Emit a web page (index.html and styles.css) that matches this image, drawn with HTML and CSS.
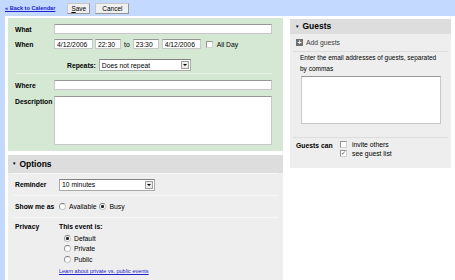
FILE: index.html
```html
<!DOCTYPE html>
<html>
<head>
<meta charset="utf-8" />
<title>Edit Event</title>
<link rel="stylesheet" href="styles.css">
</head>
<body>

<div class="topbar">
	<a class="back" href="#">« Back to Calendar</a>
	<button class="btn save"><u>S</u>ave</button>
	<button class="btn cancel">Cancel</button>
</div>

<div class="main">
	<div class="leftcol">
		<div class="details">
			<div class="row">
				<div class="label">What</div>
				<input class="field wide" type="text" />
			</div>
			<div class="row when">
				<div class="label">When</div>
				<input class="field date" type="text" value="4/12/2006" />
				<input class="field time" type="text" value="22:30" />
				<span class="to">to</span>
				<input class="field time" type="text" value="23:30" />
				<input class="field date" type="text" value="4/12/2006" />
				<input class="check" type="checkbox" />
				<span class="allday">All Day</span>
			</div>
			<div class="row repeats">
				<div class="label">Repeats:</div>
				<div class="selectbox repeatsel">
					<select><option>Does not repeat</option></select>
					<span class="arrow"></span>
				</div>
			</div>
			<div class="row where">
				<div class="label">Where</div>
				<input class="field wide" type="text" />
			</div>
			<div class="row desc">
				<div class="label">Description</div>
				<textarea class="field wide"></textarea>
			</div>
		</div>

		<div class="panel options">
			<div class="panelhead"><span class="tri">▼</span>Options</div>
			<div class="optrow">
				<div class="label">Reminder</div>
				<div class="selectbox remindsel">
					<select><option>10 minutes</option></select>
					<span class="arrow"></span>
				</div>
			</div>
			<div class="optrow">
				<div class="label">Show me as</div>
				<label class="radio"><input type="radio" name="show" />Available</label>
				<label class="radio"><input type="radio" name="show" checked />Busy</label>
			</div>
			<div class="optrow privacy">
				<div class="label">Privacy</div>
				<div class="privlist">
					<div class="privtitle">This event is:</div>
					<label class="radio"><input type="radio" name="priv" checked />Default</label>
					<label class="radio"><input type="radio" name="priv" />Private</label>
					<label class="radio"><input type="radio" name="priv" />Public</label>
					<a class="learn" href="#">Learn about private vs. public events</a>
				</div>
			</div>
		</div>
	</div>

	<div class="panel guests">
		<div class="panelhead"><span class="tri">▼</span>Guests</div>
		<div class="addguests"><span class="plus">+</span>Add guests</div>
		<div class="guestbody">
			<div class="hint">Enter the email addresses of guests, separated by commas</div>
			<textarea class="field guestarea"></textarea>
		</div>
		<div class="guestscan">
			<div class="label">Guests can</div>
			<div class="perms">
				<label class="perm"><input class="check" type="checkbox" />invite others</label>
				<label class="perm"><input class="check" type="checkbox" checked />see guest list</label>
			</div>
		</div>
	</div>
</div>

</body>
</html>
```

FILE: styles.css
```css
html, body {
	margin: 0;
	padding: 0;
	width: 100%;
	height: 100%;
	font-family: "Liberation Sans", Arial, sans-serif;
	font-size: 6.8px;
	color: rgb(0, 0, 0);
	background: rgb(195, 217, 255);
	overflow: hidden;
}

.topbar {
	height: 16px;
	display: flex;
	align-items: center;
	padding-left: 5px;
	box-sizing: border-box;
}

.back {
	color: rgb(32, 32, 204);
	font-size: 5.6px;
	font-weight: bold;
	margin-right: 12px;
}

.btn {
	font-family: inherit;
	font-size: 6.5px;
	height: 11px;
	padding: 0 3px;
	margin-right: 5px;
	background: rgb(240, 240, 240);
	border: 1px solid rgb(150, 150, 150);
	border-top-color: rgb(200, 200, 200);
	border-left-color: rgb(200, 200, 200);
	line-height: 9px;
}

.btn.cancel {
	padding: 0 6px;
}

.main {
	margin-left: 5px;
	background: white;
	height: 264px;
	display: flex;
	gap: 7px;
	padding: 2px 0 0 3px;
	box-sizing: border-box;
}

.leftcol {
	width: 275px;
	display: flex;
	flex-direction: column;
	gap: 4px;
}

.label {
	font-weight: bold;
	width: 39px;
	flex-shrink: 0;
}

.field {
	font-family: inherit;
	font-size: 6.8px;
	height: 10px;
	box-sizing: border-box;
	padding: 0 2px;
	border: 1px solid rgb(200, 200, 200);
	border-top-color: rgb(150, 150, 150);
	background: white;
	margin: 0;
	resize: none;
	outline: none;
}

/* green details block */

.details {
	background: rgb(213, 232, 212);
	padding: 6px 11px 6px 7px;
	display: flex;
	flex-direction: column;
}

.row {
	display: flex;
	align-items: center;
}

.field.wide {
	width: 218px;
}

.when {
	margin-top: 5px;
}

.field.date {
	width: 39px;
	margin-right: 2px;
}

.field.time {
	width: 26px;
}

.to {
	margin: 0 3px;
}

.when .time + .to + .time {
	margin-right: 3px;
}

.check {
	appearance: none;
	width: 7px;
	height: 7px;
	margin: 0 3px 0 3px;
	border: 1px solid rgb(150, 150, 150);
	border-right-color: rgb(210, 210, 210);
	border-bottom-color: rgb(210, 210, 210);
	background: white;
	position: relative;
	box-sizing: border-box;
}

.check:checked::after {
	content: "✓";
	position: absolute;
	left: 0;
	top: -2px;
	font-size: 6px;
	color: rgb(60, 60, 60);
}

.allday {
	margin-left: 1px;
}

.repeats {
	margin-top: 10px;
	padding-left: 52px;
	padding-bottom: 2px;
	border-bottom: 1px solid rgb(228, 240, 228);
}

.repeats .label {
	width: auto;
	margin-right: 3px;
}

.selectbox {
	display: flex;
	height: 12px;
	box-sizing: border-box;
	border: 1px solid rgb(170, 170, 170);
	border-top-color: rgb(130, 130, 130);
	background: white;
	align-items: center;
}

.selectbox select {
	appearance: none;
	border: none;
	background: transparent;
	font-family: inherit;
	font-size: 6.8px;
	flex: 1;
	padding: 0 2px;
	outline: none;
}

.selectbox .arrow {
	width: 6px;
	height: 6px;
	margin-right: 1px;
	border: 1px solid rgb(160, 160, 160);
	background: rgb(235, 235, 235);
	position: relative;
}

.selectbox .arrow::after {
	content: "";
	position: absolute;
	left: 1px;
	top: 2px;
	border-left: 2px solid transparent;
	border-right: 2px solid transparent;
	border-top: 2px solid black;
}

.repeatsel {
	width: 92px;
}

.where {
	margin-top: 6px;
}

.desc {
	margin-top: 6px;
	align-items: flex-start;
}

.desc .label {
	padding-top: 2px;
}

.desc textarea {
	height: 49px;
}

/* gray panels */

.panel {
	background: rgb(238, 238, 238);
}

.panelhead {
	background: rgb(221, 221, 221);
	font-size: 8.5px;
	font-weight: bold;
	height: 18px;
	line-height: 18px;
	padding-left: 4px;
	display: flex;
	align-items: center;
}

.tri {
	font-size: 4.5px;
	margin-right: 3px;
}

.options {
	flex: 1;
}

.optrow {
	display: flex;
	align-items: center;
	margin: 0 5px;
	padding: 0 2px;
	height: 21px;
	border-top: 1px solid rgb(247, 247, 247);
}

.optrow:first-of-type {
	margin-top: 2px;
}

.optrow .label {
	width: 44px;
}

.remindsel {
	width: 96px;
}

.radio {
	display: flex;
	align-items: center;
	margin-right: 3px;
}

.radio input {
	appearance: none;
	width: 7px;
	height: 7px;
	margin: 0 3px 0 0;
	border-radius: 50%;
	border: 1px solid rgb(200, 200, 200);
	border-top-color: rgb(120, 120, 120);
	border-left-color: rgb(150, 150, 150);
	background: white;
	box-sizing: border-box;
}

.radio input:checked {
	background: radial-gradient(circle, rgb(40, 40, 40) 1.3px, white 1.8px);
}

.optrow.privacy {
	height: auto;
	align-items: flex-start;
	padding-top: 5px;
}

.privlist {
	display: flex;
	flex-direction: column;
	gap: 3.5px;
}

.privtitle {
	font-weight: bold;
	margin-bottom: 1px;
}

.privlist .radio {
	margin-left: 5px;
}

.learn {
	color: rgb(32, 32, 204);
	font-size: 5.5px;
	margin-top: 2px;
}

/* guests */

.guests {
	width: 161px;
	height: 149px;
	margin-top: 1px;
	align-self: flex-start;
}

.guests .panelhead {
	height: 15px;
	line-height: 15px;
	padding-left: 5px;
}

.addguests {
	display: flex;
	align-items: center;
	height: 17px;
	padding-left: 6px;
	color: rgb(60, 60, 60);
	border-bottom: 1px solid rgb(221, 221, 221);
	margin: 0 3px;
}

.plus {
	width: 7px;
	height: 7px;
	background: rgb(110, 110, 110);
	color: white;
	font-size: 7px;
	font-weight: bold;
	line-height: 7px;
	text-align: center;
	margin-right: 3px;
	margin-left: -3px;
}

.guestbody {
	padding: 1px 10px 12px 7px;
	border-bottom: 1px solid rgb(221, 221, 221);
	margin: 0 3px;
}

.hint {
	font-size: 6.5px;
	line-height: 10.5px;
	margin-bottom: 2px;
}

.guestarea {
	width: 140px;
	height: 48px;
	margin-left: 1px;
}

.guestscan {
	display: flex;
	padding: 3px 6px;
}

.guestscan .label {
	width: 44px;
	padding-top: 1px;
}

.perms {
	display: flex;
	flex-direction: column;
	gap: 2px;
}

.perm {
	display: flex;
	align-items: center;
}

.perm .check {
	margin: 0 5px 0 0;
}
```
